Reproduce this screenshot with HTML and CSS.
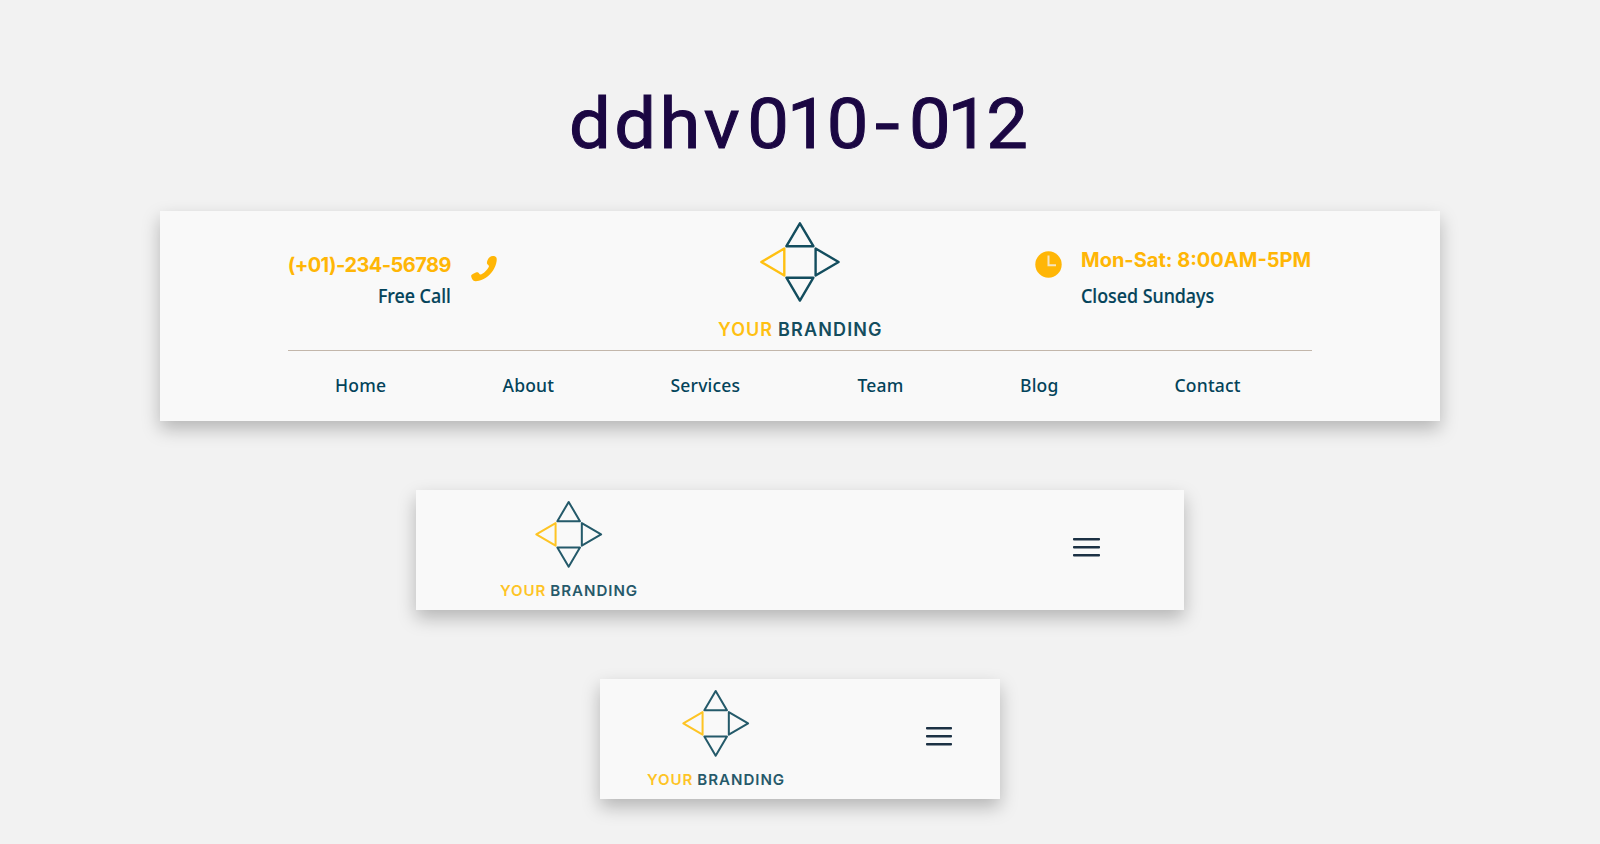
FILE: index.html
```html
<!DOCTYPE html>
<html lang="en">
<head>
<meta charset="utf-8">
<title>ddhv010-012</title>
<link rel="stylesheet" href="styles.css">
</head>
<body>
<svg width="0" height="0" class="defs" aria-hidden="true">
  <symbol id="logo" viewBox="0 0 164 116">
    <g fill="none" stroke-width="2.4" stroke-linejoin="round">
      <path stroke="#134d5e" d="M81.9 2.3 95.4 25.2H68.4ZM81.9 79.6 95.4 56.7H68.4ZM120.6 41 97.6 27.5V54.5Z"/>
      <path stroke="#ffc012" d="M43.3 41 66.3 27.5V54.5Z"/>
    </g>
    <text x="0" y="114.8" textLength="54" lengthAdjust="spacing" class="logo-your">YOUR</text>
    <text x="60" y="114.8" textLength="103.6" lengthAdjust="spacing" class="logo-brand">BRANDING</text>
  </symbol>
</svg>
<main class="page">
  <h1 class="title"><span class="word">ddhv</span><span class="num">010</span><span class="dash">-</span><span class="num last">012</span></h1>

  <header class="card desktop">
    <div class="top">
      <div class="info phone">
        <div class="info-text">
          <strong>(+01)-234-56789</strong>
          <span>Free Call</span>
        </div>
        <svg class="icon" width="26" height="26" viewBox="0 0 26 26"><path fill="#ffb606" d="M18.6 1.2C20.5-.3 23.8-.3 25.3 1.6 26.3 3.2 25.5 7.800 23.300 12.300 20.200 18.500 14.500 23.300 8 24.700 5.500 25.300 3.500 25.500 2.300 24.400 1 23.200-.1 20.800.2 19.500.6 18.300 5.300 16 6.700 16.300 8.100 16.700 8.300 18.700 9.500 18.600 12 18 16.800 13.400 17.900 10.400 18.300 9 16.200 8.700 16 7.400 15.600 5.500 17 2.600 18.600 1.200Z"/></svg>
      </div>
      <svg class="logo" width="164" height="116"><use href="#logo"/></svg>
      <div class="info hours">
        <svg class="icon" width="27" height="27" viewBox="0 0 27 27"><circle cx="13.500" cy="13.500" r="13.200" fill="#ffb606"/><path d="M13.500 4.500V14.200H21" fill="none" stroke="#f6e5c0" stroke-width="2"/></svg>
        <div class="info-text">
          <strong>Mon-Sat: 8:00AM-5PM</strong>
          <span>Closed Sundays</span>
        </div>
      </div>
    </div>
    <nav class="nav">
      <a>Home</a><a>About</a><a>Services</a><a>Team</a><a>Blog</a><a>Contact</a>
    </nav>
  </header>

  <header class="card tablet">
    <svg class="logo-small" width="137.500" height="97.300"><use href="#logo"/></svg>
    <div class="menu"><i></i><i></i><i></i></div>
  </header>

  <header class="card mobile">
    <svg class="logo-small" width="137.500" height="97.300"><use href="#logo"/></svg>
    <div class="menu"><i></i><i></i><i></i></div>
  </header>
</main>
</body>
</html>
```
FILE: styles.css
```css
* { box-sizing: border-box; }
body { margin: 0; background: #f2f2f2; font-family: "Noto Sans", sans-serif; color: #03435a; }
.defs { display: none; }
.page { height: 844px; display: flex; flex-direction: column; align-items: center; overflow: hidden; }
.title {
  margin: 0; height: 211px; padding: 82px 5px 0 0; line-height: 84px;
  font-family: Roboto, sans-serif; font-weight: 400; font-size: 70px; letter-spacing: 2.5px;
  color: #1b0743; -webkit-text-stroke: 1px #1b0743; white-space: nowrap; transform: scaleX(1.06);
}
.word { letter-spacing: 3.200px; }
.num { letter-spacing: -1.800px; margin-left: 4px; }
.last { letter-spacing: -2.800px; margin-left: 8px; }
.dash { display: inline-block; transform: scaleX(1.2); margin-left: 10px; }
.card { flex: none; background: #f9f9f9; box-shadow: 0 8px 17px rgba(0, 0, 0, .25); }
.desktop { width: 1280px; height: 210px; padding: 0 128px; }
.top { height: 140px; border-bottom: 1px solid #c3b7ab; display: flex; justify-content: space-between; padding-top: 10px; }
.info { width: 231px; display: flex; }
.info-text { display: flex; flex-direction: column; white-space: nowrap; }
.info strong { font: 700 20px/28px Inter, sans-serif; color: #ffb606; }
.phone strong { letter-spacing: -.55px; }
.info-text span { font-size: 20.500px; line-height: 28px; font-weight: 500; -webkit-text-stroke: .2px; }
.phone .info-text { width: 163px; align-items: flex-end; padding-top: 30px; }
.phone .info-text span { transform: scaleX(.87); transform-origin: right; margin-top: 2px; }
.phone .icon { margin: 35px 0 0 20px; }
.hours .info-text { padding-top: 25px; }
.hours .info-text span { transform: scaleX(.87); transform-origin: left; margin-top: 7px; }
.hours { width: 277px; }
.hours .icon { flex: none; margin: 30px 19px 0 0; }
.logo { flex: none; margin-left: 46px; }
.nav {
  height: 68px; padding-left: 47px; display: grid; align-items: center;
  grid-template-columns: 167.500px 168px 187px 162.500px 154.500px auto;
  font-size: 17.500px; font-weight: 500; letter-spacing: .2px;
}
.tablet, .mobile { display: flex; justify-content: space-between; height: 120px; margin-top: 69px; padding-top: 10px; }
.tablet { width: 768px; padding-left: 84px; padding-right: 84.500px; }
.mobile { width: 400px; padding-left: 47px; padding-right: 48px; }
.logo-small { opacity: .92; }
.menu { width: 26.500px; margin-top: 38px; display: flex; flex-direction: column; gap: 6px; }
.menu i { height: 2px; border-radius: 1px; background: #1c3144; box-shadow: 0 .5px 0 #1c3144; }
.logo-your, .logo-brand { font-family: Inter, sans-serif; font-weight: 600; font-size: 18px; fill: #ffc012; }
.logo-brand { fill: #134d5e; }
```
